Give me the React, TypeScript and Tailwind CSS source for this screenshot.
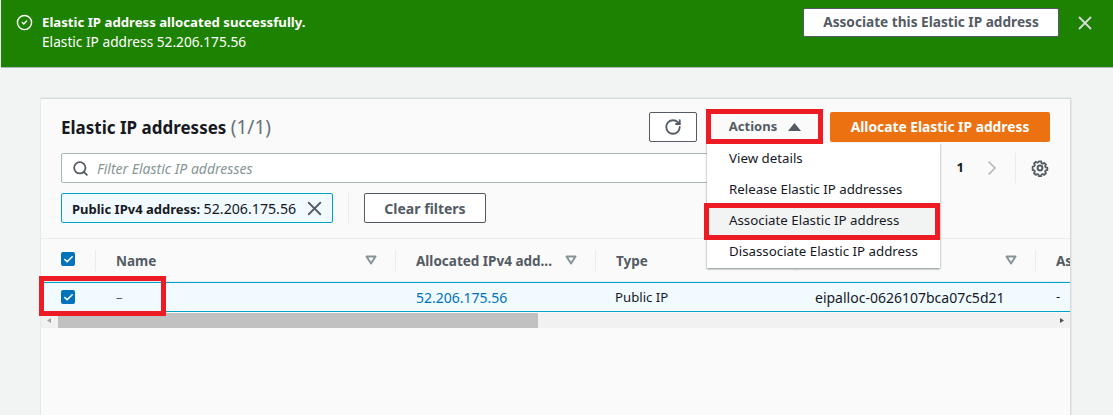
import { Check, RotateCw, Search, X, ChevronRight, CircleCheck } from "lucide-react";

const font = { fontFamily: '"Noto Sans", "Open Sans", sans-serif' };

function Box() {
  return (
    <span className="flex h-[14px] w-[14px] items-center justify-center rounded-[2px] bg-[#0073bb]">
      <Check size={11} strokeWidth={3.5} className="text-white" />
    </span>
  );
}

function Tri() {
  return (
    <svg width="12" height="10" viewBox="0 0 12 10" className="shrink-0">
      <path d="M1.5 1.5h9L6 8.5z" fill="none" stroke="#879596" strokeWidth="2" strokeLinejoin="round" />
    </svg>
  );
}

function Head({ w, label, tri = true, last = false }: { w: string; label?: string; tri?: boolean; last?: boolean }) {
  return (
    <div className={`${w} flex h-[21px] shrink-0 items-center justify-between pl-5 pr-[18px] ${last ? "" : "border-r border-[#eaeded]"}`}>
      <span className="whitespace-nowrap pt-[2px]">{label}</span>
      {tri && <Tri />}
    </div>
  );
}

const menu = ["View details", "Release Elastic IP addresses", "Associate Elastic IP address", "Disassociate Elastic IP address"];

export default function App() {
  return (
    <div style={font} className="relative h-[415px] w-[1113px] overflow-hidden bg-[#f2f3f3] text-[13px] text-[#16191f]">
      {/* Flash banner */}
      <div className="ml-px flex h-[68px] items-start justify-between border-b border-[#aab7b8] bg-[#1d8102] pl-[15px] pr-[17px] text-white">
        <div className="flex items-start gap-[9px] pt-[12px]">
          <CircleCheck size={17} strokeWidth={2} className="mt-[2px]" />
          <div className="leading-[20px]">
            <div className="text-[13.2px] font-bold">Elastic IP address allocated successfully.</div>
            <div className="text-[13.7px]">Elastic IP address 52.206.175.56</div>
          </div>
        </div>
        <div className="flex items-center gap-[15px] pt-[8px]">
          <button className="flex h-[29px] w-[256px] items-center justify-center rounded-[2px] border border-[#545b64] bg-white text-[13.65px] font-bold text-[#545b64]">
            Associate this Elastic IP address
          </button>
          <X size={22} strokeWidth={2} className="text-[#d5dbdb]" />
        </div>
      </div>

      {/* Card */}
      <div className="ml-[41px] mt-[30px] h-[330px] w-[1030px] border-r border-t border-[#d5dbdb] bg-[#fafafa] shadow-[0_0_1px_#aab7b8]">
        <div className="flex h-[54px] items-start justify-between pl-5 pr-5 pt-[13px]">
          <div className="text-[17px] font-bold leading-[30px]">
            Elastic IP addresses <span className="text-[19px] font-normal text-[#687078]">(1/1)</span>
          </div>
          <div className="flex items-center gap-[10px]">
            <button className="mr-[3px] flex h-[30px] w-[48px] items-center justify-center rounded-[2px] border border-[#545b64] bg-white text-[#545b64]">
              <RotateCw size={18} strokeWidth={2.4} />
            </button>
            <button className="flex h-[30px] w-[110px] items-center justify-center gap-[11px] font-bold text-[#545b64]">
              Actions
              <svg width="13" height="8" viewBox="0 0 13 8"><path d="M6.5 0l6.5 8H0z" fill="#545b64" /></svg>
            </button>
            <button className="flex h-[30px] w-[220px] items-center justify-center rounded-[2px] bg-[#ec7211] text-[13.8px] font-bold text-white">
              Allocate Elastic IP address
            </button>
          </div>
        </div>

        <div className="flex h-[30px] items-center pl-5 pr-[20px]">
          <div className="flex h-[30px] w-[680px] items-center gap-[8px] rounded-[2px] border border-[#aab7b8] bg-white pl-[10px]">
            <Search size={17} strokeWidth={2.5} className="text-[#545b64]" />
            <span className="pt-px text-[14px] italic text-[#879596]">Filter Elastic IP addresses</span>
          </div>
          <div className="ml-auto flex items-center">
            <span className="font-bold">1</span>
            <ChevronRight size={24} strokeWidth={1.6} className="ml-[16px] text-[#aab7b8]" />
            <span className="ml-[11px] mr-[15px] h-[30px] w-px bg-[#eaeded]" />
            <svg width="18" height="18" viewBox="0 0 18 18" fill="none" stroke="#545b64" className="mr-[1px]">
              <circle cx="9" cy="9" r="2.4" strokeWidth="2" />
              <path d="M7.6 2h2.8l.4 2 1.4.6 1.7-1.1 2 2-1.1 1.7.6 1.4 2 .4v2.8l-2 .4-.6 1.4 1.1 1.7-2 2-1.7-1.1-1.4.6-.4 1.9H7.6l-.4-1.9-1.4-.6-1.7 1.1-2-2 1.1-1.7-.6-1.4-2-.4V7.8l2-.4.6-1.4-1.1-1.7 2-2 1.7 1.1 1.4-.6z" strokeWidth="2" strokeLinejoin="round" transform="translate(9 9) scale(.88) translate(-9 -9.4)" />
            </svg>
          </div>
        </div>

        <div className="mt-[10px] flex h-[30px] items-center pl-5">
          <div className="flex h-[30px] w-[272px] items-center rounded-[2px] border border-[#00a1c9] bg-[#f1faff] pl-[10px]">
            <span className="whitespace-nowrap pt-px"><b>Public IPv4 address:</b> <span className="text-[14.2px]">52.206.175.56</span></span>
            <X size={23} strokeWidth={1.9} className="ml-[7px] shrink-0 text-[#545b64]" />
          </div>
          <span className="ml-[15px] h-[30px] w-px bg-[#eaeded]" />
          <button className="ml-[15px] h-[30px] w-[122px] rounded-[2px] border border-[#545b64] bg-white pt-px text-[14px] font-bold text-[#545b64]">
            Clear filters
          </button>
        </div>

        {/* Table */}
        <div className="mt-[15px] overflow-hidden border-t border-[#eaeded]">
          <div className="flex h-[43px] w-[1110px] items-center border-b border-[#eaeded] text-[13.5px] font-bold text-[#545b64]">
            <div className="flex h-[21px] w-[55px] shrink-0 items-center border-r border-[#eaeded] pb-[2px] pl-5"><Box /></div>
            <Head w="w-[300px]" label="Name" />
            <Head w="w-[200px]" label="Allocated IPv4 add..." />
            <Head w="w-[200px]" label="Type" tri={false} />
            <Head w="w-[240px]" />
            <Head w="w-[115px]" label="Associated" tri={false} last />
          </div>
          <div className="flex h-[30px] w-[1110px] items-center border-y border-[#00a1c9] bg-[#f1faff]">
            <div className="flex w-[55px] shrink-0 pl-5"><Box /></div>
            <div className="w-[300px] shrink-0 pl-5 pt-[2px] text-[#545b64]">–</div>
            <div className="w-[200px] shrink-0 pl-5 text-[14px] text-[#0073bb]">52.206.175.56</div>
            <div className="w-[200px] shrink-0 pl-[19px] pt-px text-[13.2px]">Public IP</div>
            <div className="w-[240px] shrink-0 pl-[19px] text-[14px]">eipalloc-0626107bca07c5d21</div>
            <div className="pl-5">-</div>
          </div>
        </div>
        {/* Scrollbar */}
        <div className="mt-px flex h-[15px] items-center bg-[#f1f1f1]">
          <svg width="17" height="15" viewBox="0 0 17 15" className="shrink-0"><path d="M10 5v5L6 7.5z" fill="#a3a3a3" /></svg>
          <div className="h-[15px] w-[480px] bg-[#c1c1c1]" />
          <svg width="17" height="15" viewBox="0 0 17 15" className="ml-auto shrink-0"><path d="M7 5v5l4-2.5z" fill="#505050" /></svg>
        </div>
      </div>

      {/* Dropdown menu */}
      <div className="absolute left-[707px] top-[143px] w-[233px] bg-white pb-[1px] shadow-[0_1px_2px_rgba(0,28,36,0.5)]">
        {menu.map((m, i) => (
          <div key={m} className={`flex h-[31px] items-center pl-[22px] text-[13.3px] ${i === 2 ? "bg-[#f2f3f3]" : ""}`}>{m}</div>
        ))}
      </div>

      {/* Red annotation boxes */}
      <div className="absolute left-[706px] top-[109px] h-[35px] w-[117px] border-[5px] border-[#ed1c24]" />
      <div className="absolute left-[704px] top-[203px] h-[37px] w-[236px] border-[5px] border-[#ed1c24]" />
      <div className="absolute left-[39px] top-[276px] h-[40px] w-[127px] border-[5px] border-[#ed1c24]" />
    </div>
  );
}
